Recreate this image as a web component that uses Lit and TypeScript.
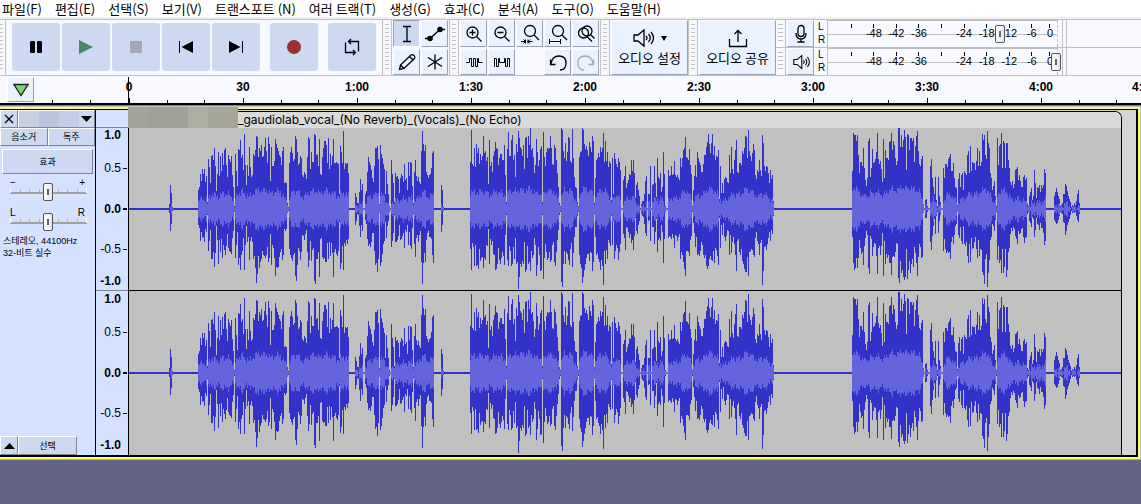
import { LitElement, html, css, svg } from "lit";
import { customElement } from "lit/decorators.js";

/* Peak height of each one-pixel column, per burst of sound; x is the offset from the clip start. */
const BURSTS: { x: number; peaks: number[] }[] = [
  { x: 40, peaks: [5, 24, 16, 2] },
  { x: 69, peaks: [
    19,22,35,28,40,35,40,27,33,7,50,42,26,53,54,49,61,43,18,35,57,33,53,38,56,44,59,61,44,32,54,50,47,53,34,22,3,
    55,38,23,60,59,69,51,54,39,75,44,24,44,33,62,42,32,34,55,53,59,73,72,52,61,58,64,52,53,62,71,58,46,72,65,28,62,
    43,43,48,70,65,61,58,54,52,44,58,62,26,27,26,6,2,46,57,62,56,48,50,73,70,57,44,46,53,51,34,32,37,35,30,52,72,70,
    40,57,47,47,75,74,54,55,43,70,35,34,52,61,68,68,64,46,71,40,55,44,53,70,46,46,47,46,45,15,63,57,46,78,40,46,45,46,36] },
  { x: 226, peaks: [
    16,12,6,6,17,30,19,25,1,1,15,18,37,52,47,44,39,31,27,43,61,61,63,50,5,64,55,51,45,40,15,38,25,15,3,1,49,35,26,7,
    36,32,33,30,16,31,35,33,27,45,29,31,19,47,33,47,46,23,6,37,49,33,28,32,27,25,58,78,65,58,64,37,34,31,34,35,41,56,58] },
  { x: 312, peaks: [24, 19, 2] },
  { x: 341, peaks: [
    47,79,45,43,61,42,65,56,61,45,55,49,53,73,56,58,48,52,25,69,43,47,37,53,58,67,61,60,44,51,55,55,49,49,64,34,7,
    60,77,53,53,69,74,49,54,32,65,57,78,71,62,60,53,64,40,71,72,51,73,64,81,59,61,52,36,44,70,57,43,49,60,63,7,77,52,
    43,57,61,60,61,73,61,45,44,64,61,49,36,22,6,3,81,79,58,51,66,48,57,72,71,48,46,80,51,32,22,21,7,3,52,57,58,81,79,
    65,60,63,59,53,67,62,57,73,68,6,31,49,51,56,52,62,57,61,76,47,68,48,57,42,48,46,9,51,15,56,50,45,42,51,47,39,1,1,
    29,33,43,21,26,29,35,34,49,38,49,36,11,24,27,19,13,1,5,8,8,15,28,33,1,15,15,43,1,24,25,43,26,12,51,32,30,36,17,22,
    57,35,3,1,1,39,33,34,43,34,35,48,34,32,34,31,29,51,42,51,59,61,72,52,51,49,60,44,35,3,19,33,44,32,57,51,47,44,37,
    37,45,54,54,62,67,75,65,56,66,75,54,63,49,53,52,59,10,43,16,26,16,30,32,31,27,26,54,36,62,40,35,49,59,69,37,36,46,
    46,44,58,55,61,73,72,51,79,58,53,48,56,65,59,34,30,39,37,49,39,33,74,66,43,38,43,42,36,26,39,30,34,8] },
  { x: 723, peaks: [
    38,76,74,74,68,74,54,36,47,47,43,61,41,29,23,31,68,71,32,41,60,46,47,50,57,76,50,45,48,40,27,70,31,59,51,51,49,67,
    68,76,59,68,64,51,44,48,81,81,62,74,62,69,79,72,39,75,74,59,71,71,68,71,47,63,73,78,58,45,43,50,53,5,1,9,10,3,1,1,
    43,50,31,22,15,32,9,3,32,13,7,1,1,41,31,45,45,42,50,52,55,38,38,46,31,22,21,4,30,36,22,34,36,19,38,36,34,54,58,36,
    63,38,47,46,46,39,48,61,43,58,43,47,75,69,74,54,50,78,66,61,36,31,19,23,28,13,3,71,44,63,65,76,41,68,66,41,66,66,
    49,41,27,24,28,21,25,39,40,42,29,34,28,22,22,32,34,29,31,5,3,13,17,21,9,13,39,26,11,22,21,24,17,24,21,24,40,36] },
  { x: 925, peaks: [13,17,21,17,13,10,3,4,6,15,15,25,23,18,13,10,7,2,4,3,6,4,8,15,19,6] },
];

const CLIP_WIDTH = 992;
const HALF = 81;

function buildPaths() {
  let peak = "";
  let rms = "";
  for (const { x, peaks } of BURSTS) {
    peaks.forEach((h, i) => {
      const col = x + i;
      const swing = 0.86 + 0.1 * Math.sin(col * 0.31) + 0.07 * Math.sin(col * 1.7);
      const low = h < 4 ? h : Math.min(81, Math.round(h * swing));
      peak += `M${col} ${HALF - h}h1V${HALF + low}h-1z`;
      let sum = 0;
      let n = 0;
      for (let k = -3; k <= 3; k++) {
        const v = peaks[i + k];
        if (v !== undefined) { sum += v; n++; }
      }
      const body = Math.round(Math.min(h * 0.7, 25, (sum / n) * 0.31 + 2 * Math.sin(col * 2.3) + 2 * Math.sin(col * 0.9)));
      if (body > 0) rms += `M${col} ${HALF - body}h1V${HALF + body}h-1z`;
    });
  }
  return { peak, rms };
}
const WAVE = buildPaths();

const speaker = svg`<path d="M1 7h4l6-5v16l-6-5h-4z"/><path d="M13 8q2 2 0 4M15.500 6q3.500 4 0 8M18 4q5 6 0 12"/>`;

@customElement("app-root")
export class AppRoot extends LitElement {
  static styles = css`
    :host { display: block; min-height: 100vh; background: #646487; color: #000; overflow: hidden;
      font-family: "Liberation Sans", "Noto Sans CJK KR", sans-serif; font-size: 12px; }
    * { box-sizing: border-box; }
    button { font: inherit; color: inherit; margin: 0; padding: 0; border: 0; border-radius: 0; display: flex; align-items: center; justify-content: center; }
    svg { display: block; }
    .line { fill: none; stroke: #000; stroke-width: 1.3; }
    .thin { fill: none; stroke: #000; stroke-width: 1; }
    .menu { display: flex; gap: 13px; height: 19px; padding-left: 2px; background: #fff; border-bottom: 2px solid #f0f0f0;
      font-family: "Noto Sans CJK KR", sans-serif; font-size: 13px; line-height: 17px; white-space: nowrap; }
    .menu button { background: none; }
    .bars { display: flex; height: 57px; background: #f8f8ff; border-top: 1px solid #c0c0c0; border-bottom: 1px solid #c0c0c0; }
    .grip { flex: none; width: 10px; border-left: 1px solid #c0c0c0; border-right: 1px solid #c0c0c0; padding: 4px 2px; }
    .grip::before { content: ""; display: block; height: 100%; background: repeating-linear-gradient(#c0c0c0 0 1px, transparent 1px 4px); }
    .grip.first { width: 6px; border-left: 0; padding: 4px 2px 4px 0; }
    .transport { display: flex; gap: 2px; padding: 3px 6px 3px 6px; }
    .transport button { width: 48px; height: 48px; border-radius: 3px; background: #ccd9f1; }
    .transport .apart { margin-left: 8px; }
    .grid { display: grid; grid-auto-flow: row; gap: 2px 1px; padding: 0 1px; grid-template-rows: 27px 26px; }
    .tools { grid-template-columns: 27px 27px; }
    .edit { grid-template-columns: repeat(5, 27px); }
    .tile { background: #eaf1ff; border: 1px solid; border-color: #fff #9a9fb2 #9a9fb2 #fff; }
    .tile.on { background: #ccd9f1; border-color: #9a9fb2 #fff #fff #9a9fb2; }
    .big { width: 77px; margin-left: 1px; flex-direction: column; gap: 1px; font-family: "Noto Sans CJK KR", sans-serif; font-size: 13px; line-height: 18px; white-space: nowrap; }
    .big .row { display: flex; align-items: center; gap: 6px; }
    .meters { flex: 1; min-width: 0; display: grid; grid-template-rows: 27px 27px; gap: 1px; background: #c0c0c0; }
    .meter { display: flex; background: #f8f8ff; }
    .meter .grip { border-left: 0; }
    .meter .tile { width: 27px; flex: none; margin-left: 1px; }
    .lr { width: 13px; padding-left: 4px; font-size: 10px; line-height: 13px; }
    .scale { position: relative; width: 231px; border-left: 1px solid #c0c0c0; border-right: 1px dashed #c0c0c0; border-top: 1px solid #c0c0c0;
      background: linear-gradient(#c0c0c0, #c0c0c0) 0 13px / 100% 1px no-repeat; display: grid; grid-template-columns: repeat(9, 1fr) 14px; padding: 3px 0 0 12px; }
    .scale span { font-size: 11px; line-height: 11px; text-align: center; white-space: nowrap; }
    .scale span::before { content: ""; display: block; width: 1px; height: 4px; margin: 0 auto; background: #000; }
    .scale input { position: absolute; left: 0; top: 3px; width: 233px; }
    .end { width: 9px; margin-left: 4px; border-left: 1px solid #c0c0c0; }
    .end::before { content: ""; display: block; height: 100%; width: 3px; border-right: 1px solid #c0c0c0; }
    input[type="range"] { appearance: none; height: 20px; margin: 0; padding: 0; background: none; }
    input[type="range"]::-webkit-slider-thumb { appearance: none; width: 10px; height: 18px; border: 1px solid #50535c; border-radius: 2px;
      background: linear-gradient(#666, #666) center / 2px 6px no-repeat, linear-gradient(90deg, #fff, #e4e6ec); }

    .timeline { display: flex; height: 29px; background: #f8f8ff; border-bottom: 2px solid #000; overflow: hidden; }
    .pin { flex: none; width: 27px; height: 25px; margin: 1px 0 0 7px; }
    .lead { flex: none; width: 38px; }
    .cell { flex: none; width: 114px; }
    .cell.zero { background: linear-gradient(#000, #000) 56px 1px / 1px 100% no-repeat; }
    .cell b { display: block; height: 21px; text-align: center; font-size: 12px; line-height: 23px; }
    .cell.last b { text-align: left; padding-left: 34px; }
    .ticks { display: flex; justify-content: space-between; align-items: flex-end; height: 6px; padding: 0 18px; }
    .ticks i { width: 1px; height: 3px; background: #000; }
    .ticks i.major { height: 5px; }
    .lead .ticks { margin-top: 21px; }

    .frame { border-top: 1px solid #808090; background: #c0c0c0; padding: 1px 1px 0 0; border-bottom: 1px solid #b4b089; }
    .track { display: flex; height: 352px; border: solid #ffff6e; border-width: 2px 2px 2px 0; }
    .inner { display: flex; flex: 1; min-width: 0; border: solid #000; border-width: 1px 2px 2px 0; background: #d5d5d5; }
    .panel { flex: none; width: 96px; display: flex; flex-direction: column; background: #d5e2ff; border-right: 1px solid #000;
      font-family: "Noto Sans CJK KR", sans-serif; font-size: 9px; line-height: 12px; }
    .b { background: #ccd9f1; border: 1px solid; border-color: #fff #808490 #808490 #fff; }
    .head { display: grid; grid-template-columns: 18px 1fr; height: 18px; }
    .head .title { background: linear-gradient(90deg, #c6d0e2 0 20px, #b9c5dc 20px 40px, #c2cee6 40px 60px, #ccd9f1 60px); justify-content: flex-end; padding-right: 2px; }
    .pair { display: grid; grid-template-columns: 1fr 1fr; height: 18px; }
    .fx { height: 25px; margin: 3px 2px 0; }
    .knob { position: relative; padding: 5px 8px 0 10px; height: 30px; line-height: 7px; }
    .knob .ends { display: flex; justify-content: space-between; padding-right: 2px; font-family: "Liberation Sans", sans-serif; font-size: 10px; }
    .knob .rail { display: flex; justify-content: space-between; align-items: center; height: 6px; margin-top: 2px; border-bottom: 2px solid #a0a0a0; }
    .rail i { width: 1px; height: 3px; background: #b4b4b4; }
    .rail i:first-child, .rail i:last-child { height: 5px; background: #fff; }
    .knob input { position: absolute; left: 10px; top: 8px; width: 76px; }
    .info { padding: 1px 3px; font-family: "Liberation Sans", "Noto Sans CJK KR", sans-serif; font-size: 9px; line-height: 12px; white-space: nowrap; margin: 0; }
    .foot { display: grid; grid-template-columns: 18px 59px; height: 19px; margin-top: auto; }
    .vruler { flex: none; width: 33px; display: flex; flex-direction: column; background: #d5e2ff; border-right: 1px solid #000; }
    .vtop { height: 18px; border-bottom: 1px solid #808490; }
    .vscale { display: grid; grid-template-rows: 15px 50px 32px 48px 17px; font-size: 12px; line-height: 15px; }
    .vscale + .vscale { border-top: 1px solid #808490; padding-top: 1px; }
    .vscale span { display: flex; justify-content: flex-end; align-items: center; gap: 2px; padding-right: 1px; }
    .vscale span::after { content: ""; width: 4px; height: 1px; background: #000; }
    .vscale .bold { font-weight: bold; }
    .vscale .edge { padding-right: 7px; }
    .vscale .edge::after { display: none; }
    .vscale .bold:not(.edge)::after { height: 2px; }
    .clip { flex: none; width: 993px; margin-top: 1px; border: solid #000; border-width: 1px 1px 0 0; border-radius: 0 7px 0 0; background: #c0c0c0; }
    .name { display: flex; height: 16px; background: #dadada; border-radius: 0 6px 0 0; font-family: Inter, sans-serif; font-size: 12px; line-height: 15px; white-space: nowrap; }
    .mask { flex: none; width: 110px; height: 21px; margin: -5px 0 0 -1px; background: linear-gradient(90deg, #a3a399 0 20px, #a0a096 20px 60px, #adada0 60px 80px, #a5a598 80px); }
    .channel + .channel { border-top: 1px solid #000; padding-top: 1px; }
    .peak { fill: #3232c8; }
    .rms { fill: #6464dc; }
  `;

  icon(w: number, h: number, body: unknown) {
    return html`<svg width=${w} height=${h} viewBox="0 0 ${w} ${h}" aria-hidden="true">${body}</svg>`;
  }

  grip(first = false) {
    return html`<div class=${first ? "grip first" : "grip"}></div>`;
  }

  tile(label: string, body: unknown, on = false) {
    return html`<button class=${on ? "tile on" : "tile"} aria-label=${label}>${this.icon(20, 20, body)}</button>`;
  }

  meter(label: string, glyph: unknown, value: number) {
    const marks = ["", "-48", "-42", "-36", "", "-24", "-18", "-12", "-6", "0"];
    return html`<div class="meter">
      ${this.grip()}
      ${this.tile(label, glyph)}
      <div class="lr">L<br />R</div>
      <div class="scale">
        ${marks.map((m) => html`<span>${m}</span>`)}
        <input type="range" aria-label=${label} min="0" max="100" .value=${String(value)} />
      </div>
      <div class="end"></div>
    </div>`;
  }

  channel() {
    return html`<div class="channel"><svg width=${CLIP_WIDTH} height="162" viewBox="0 0 ${CLIP_WIDTH} 162" shape-rendering="crispEdges">
      <rect class="peak" x="0" y="80" width=${CLIP_WIDTH} height="2" />
      <path class="peak" d=${WAVE.peak} />
      <path class="rms" d=${WAVE.rms} />
    </svg></div>`;
  }

  vscale() {
    return html`<div class="vscale">
      <span class="bold edge">1.0</span><span>0.5</span><span class="bold">0.0</span><span>-0.5</span><span class="bold edge">-1.0</span>
    </div>`;
  }

  knob(label: string, a: string, b: string) {
    return html`<div class="knob">
      <div class="ends"><span>${a}</span><span>${b}</span></div>
      <div class="rail">${Array.from({ length: 9 }, () => html`<i></i>`)}</div>
      <input type="range" aria-label=${label} min="0" max="100" value="50" />
    </div>`;
  }

  render() {
    const menus = ["파일(F)", "편집(E)", "선택(S)", "보기(V)", "트랜스포트 (N)", "여러 트랙(T)", "생성(G)", "효과(C)", "분석(A)", "도구(O)", "도움말(H)"];
    const times = ["0", "30", "1:00", "1:30", "2:00", "2:30", "3:00", "3:30", "4:00", "4:30"];
    const cellClass = (i: number) => (i === 0 ? "cell zero" : i === times.length - 1 ? "cell last" : "cell");
    const lens = svg`<circle class="line" cx="10" cy="7" r="5.500"/><path class="line" d="M14 11l5 5"/>`;
    return html`
      <nav class="menu">${menus.map((m) => html`<button>${m}</button>`)}</nav>
      <div class="bars">
        ${this.grip(true)}
        <div class="transport">
          <button aria-label="일시정지">${this.icon(16, 16, svg`<rect x="2" y="2" width="5" height="12" rx="1"/><rect x="9" y="2" width="5" height="12" rx="1"/>`)}</button>
          <button aria-label="재생">${this.icon(16, 16, svg`<path fill="#48896e" d="M1 1l14 7-14 7z"/>`)}</button>
          <button aria-label="정지">${this.icon(16, 16, svg`<rect fill="#a5a9b3" x="2" y="2" width="12" height="12"/>`)}</button>
          <button aria-label="시작으로">${this.icon(16, 16, svg`<rect x="1" y="2" width="1" height="12"/><path d="M15 2v12L3.500 8z"/>`)}</button>
          <button aria-label="끝으로">${this.icon(16, 16, svg`<path d="M1 2v12l11.500-6z"/><rect x="14" y="2" width="1" height="12"/>`)}</button>
          <button class="apart" aria-label="녹음">${this.icon(16, 16, svg`<circle fill="#963232" cx="8" cy="8" r="7"/>`)}</button>
          <button class="apart" aria-label="반복">${this.icon(16, 18, svg`<path class="line" d="M1.500 4.500v10h10M9 12l2.500 2.500L9 17M14.500 13.500v-10h-10M7 1L4.500 3.500 7 6"/>`)}</button>
        </div>
        ${this.grip()}
        <div class="grid tools">
          ${this.tile("선택 도구", svg`<path class="line" d="M6 2.500h3.500l.5 1 .5-1h3.500M10 3v14M6 17.500h3.500l.5-1 .5 1h3.500"/>`, true)}
          ${this.tile("엔벨로프 도구", svg`<path class="line" d="M0 14.500h5L15 5.500h5"/><circle cx="5" cy="14.500" r="2.800"/><circle cx="15" cy="5.500" r="2.800"/>`)}
          ${this.tile("그리기 도구", svg`<path class="line" d="M2.500 17.500l1-4.500L14 3q1.500-1 3 .5t.5 3L7 16.500zM12.500 4.500l3.500 3.500M3.500 13l3.500 3.500"/>`)}
          ${this.tile("다중 도구", svg`<path class="line" d="M10 2.500v15M3 5.500l14 9M17 5.500l-14 9"/>`)}
        </div>
        ${this.grip()}
        <div class="grid edit">
          ${this.tile("확대", svg`<circle class="line" cx="8.500" cy="8.500" r="5.500"/><path class="line" d="M12.500 12.500l5 5M5.500 8.500h6M8.500 5.500v6"/>`)}
          ${this.tile("축소", svg`<circle class="line" cx="8.500" cy="8.500" r="5.500"/><path class="line" d="M12.500 12.500l5 5M5.500 8.500h6"/>`)}
          ${this.tile("선택에 맞춤", svg`${lens}<path class="thin" d="M1 17.500h4.500M8 17.500h4.500M3.500 15.500l2 2-2 2M10 15.500l-2 2 2 2M5.500 15.500v4M8 15.500v4"/>`)}
          ${this.tile("프로젝트에 맞춤", svg`${lens}<path class="thin" d="M1.500 17.500h11M1.500 15v5M12.500 15v5"/>`)}
          ${this.tile("확대 전환", svg`<circle class="line" cx="11" cy="7" r="5"/><circle class="line" cx="7.500" cy="9" r="5"/><path class="line" d="M14.500 10.500l4 4M11 12.500l5 5"/>`)}
          ${this.tile("바깥 잘라내기", svg`<path class="thin" d="M2 10.500h3.500v-4h2v8h2v-8h2v8h2v-8h1v4h4"/>`)}
          ${this.tile("무음", svg`<path class="thin" d="M2.500 15V6.500h2v8h2v-8h1v4h5v-4h1v8h2v-8h2V15"/>`)}
          <span></span>
          ${this.tile("실행 취소", svg`<path class="line" d="M2.500 7.500v5h5M3 12q1-8 8-8t7 7-6 7"/>`)}
          ${this.tile("다시 실행", svg`<g opacity=".3"><path class="line" d="M17.500 7.500v5h-5M17 12q-1-8-8-8t-7 7 6 7"/></g>`)}
        </div>
        ${this.grip()}
        <button class="tile big">
          <span class="row">${this.icon(22, 20, svg`<g class="line">${speaker}</g>`)}${this.icon(6, 6, svg`<path d="M0 1h6L3 6z"/>`)}</span>
          오디오 설정
        </button>
        ${this.grip()}
        <button class="tile big">
          ${this.icon(20, 20, svg`<path class="line" d="M1.500 11v7.500h17V11M10 14V2.500M6.500 6L10 2.500 13.500 6"/>`)}
          오디오 공유
        </button>
        <div class="meters">
          ${this.meter("녹음 레벨", svg`<rect class="line" x="7" y="1.500" width="6" height="11" rx="3"/><path class="line" d="M5 9q0 6 5 6t5-6M10 15v3M6.500 18h7"/>`, 75)}
          ${this.meter("재생 레벨", svg`<g class="line" transform="translate(2 2) scale(.8)">${speaker}</g>`, 100)}
        </div>
      </div>
      <div class="timeline">
        <button class="tile pin" aria-label="재생 헤드 고정">${this.icon(16, 14, svg`<path d="M1 1.500h14L8 12.500z" fill="#78d86e" stroke="#222" stroke-width="1.300"/>`)}</button>
        <div class="lead"><div class="ticks"><i></i></div></div>
        ${times.map((t, i) => html`<div class=${cellClass(i)}><b>${t}</b><div class="ticks"><i></i><i class="major"></i><i></i></div></div>`)}
      </div>
      <main class="frame">
        <div class="track">
          <div class="inner">
            <section class="panel">
              <div class="head">
                <button class="b" aria-label="닫기">${this.icon(10, 10, svg`<path class="line" d="M1 1l8 8M9 1L1 9"/>`)}</button>
                <button class="b title" aria-label="트랙 메뉴">${this.icon(11, 6, svg`<path d="M0 0h11L5.500 6z"/>`)}</button>
              </div>
              <div class="pair"><button class="b">음소거</button><button class="b">독주</button></div>
              <button class="b fx">효과</button>
              ${this.knob("게인", "−", "+")}
              ${this.knob("팬", "L", "R")}
              <p class="info">스테레오, 44100Hz<br />32-비트 실수</p>
              <div class="foot">
                <button class="b" aria-label="접기">${this.icon(11, 6, svg`<path d="M0 6h11L5.500 0z"/>`)}</button>
                <button class="b">선택</button>
              </div>
            </section>
            <div class="vruler"><div class="vtop"></div>${this.vscale()}${this.vscale()}</div>
            <section class="clip">
              <div class="name"><span class="mask"></span>_gaudiolab_vocal_(No Reverb)_(Vocals)_(No Echo)</div>
              ${this.channel()}${this.channel()}
            </section>
          </div>
        </div>
      </main>
    `;
  }
}
